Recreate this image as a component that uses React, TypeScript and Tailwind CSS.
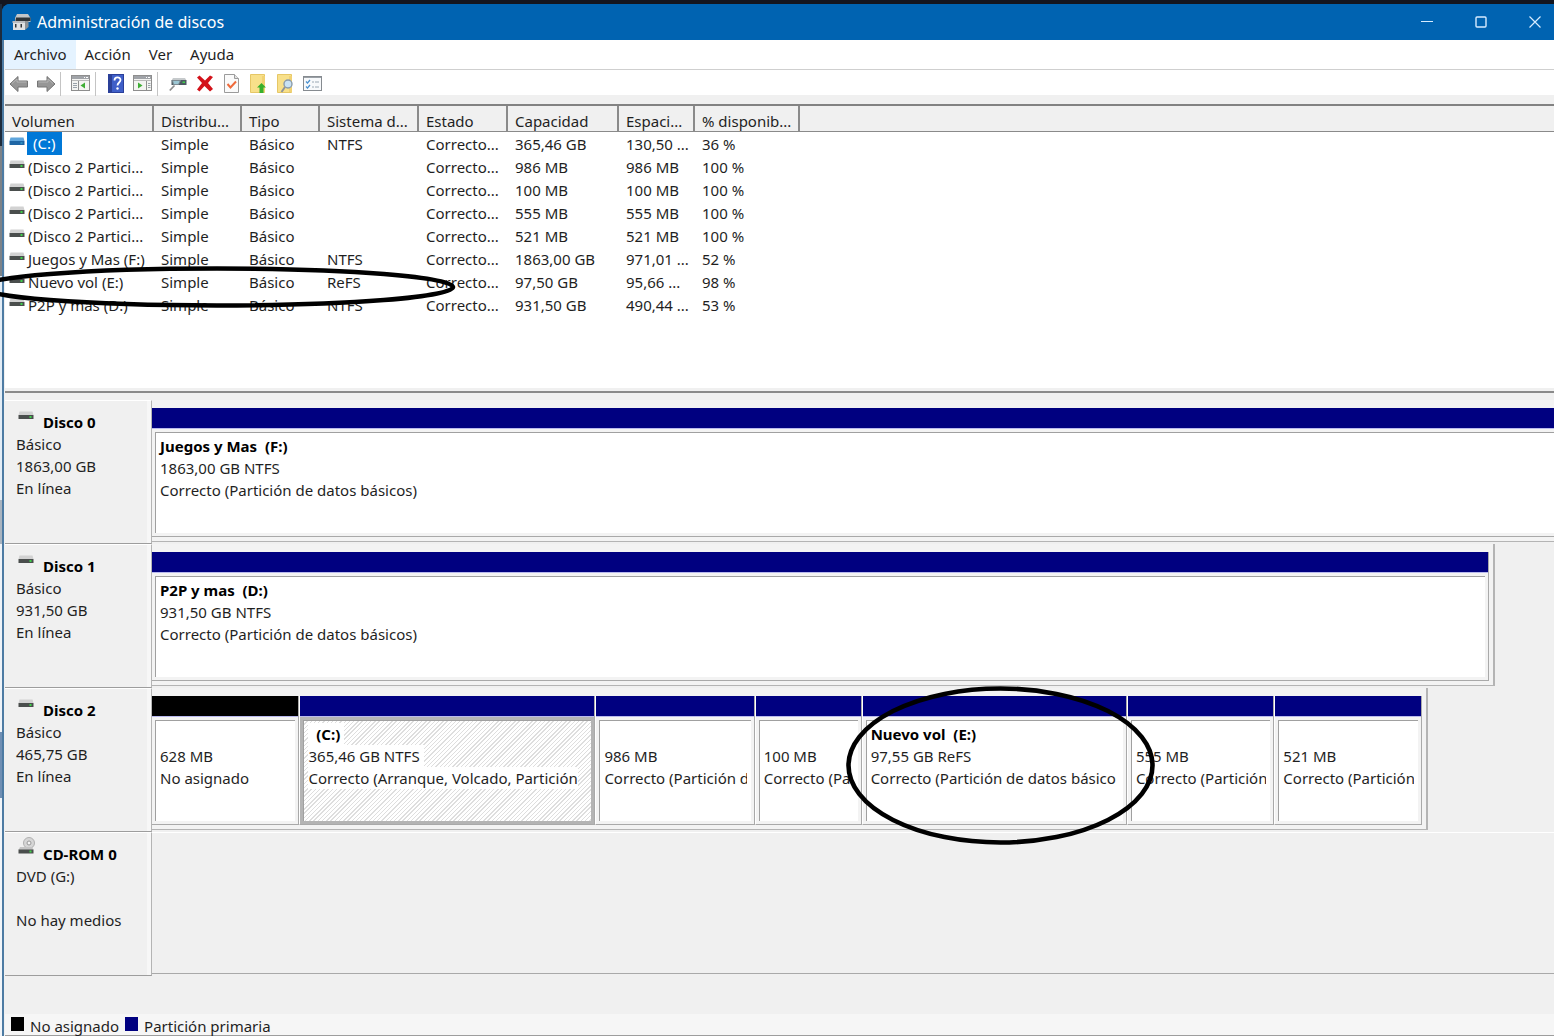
import React, { useState } from "react";

type Volume = {
  name: string;
  layout: string;
  type: string;
  fs: string;
  status: string;
  capacity: string;
  free: string;
  percent: string;
};

type Partition = {
  label?: string;
  size: string;
  status: string;
  weight: number;
  unallocated?: boolean;
  selected?: boolean;
};

type Disk = {
  name: string;
  lines: string[];
  width: string;
  cdrom?: boolean;
  partitions: Partition[];
};

const columns = [
  { label: "Volumen", width: "w-[149px]" },
  { label: "Distribu...", width: "w-[88px]" },
  { label: "Tipo", width: "w-[78px]" },
  { label: "Sistema d...", width: "w-[99px]" },
  { label: "Estado", width: "w-[89px]" },
  { label: "Capacidad", width: "w-[111px]" },
  { label: "Espaci...", width: "w-[76px]" },
  { label: "% disponib...", width: "w-[105px]" },
];

const volumes: Volume[] = [
  { name: "(C:)", layout: "Simple", type: "Básico", fs: "NTFS", status: "Correcto...", capacity: "365,46 GB", free: "130,50 ...", percent: "36 %" },
  { name: "(Disco 2 Partici...", layout: "Simple", type: "Básico", fs: "", status: "Correcto...", capacity: "986 MB", free: "986 MB", percent: "100 %" },
  { name: "(Disco 2 Partici...", layout: "Simple", type: "Básico", fs: "", status: "Correcto...", capacity: "100 MB", free: "100 MB", percent: "100 %" },
  { name: "(Disco 2 Partici...", layout: "Simple", type: "Básico", fs: "", status: "Correcto...", capacity: "555 MB", free: "555 MB", percent: "100 %" },
  { name: "(Disco 2 Partici...", layout: "Simple", type: "Básico", fs: "", status: "Correcto...", capacity: "521 MB", free: "521 MB", percent: "100 %" },
  { name: "Juegos y Mas (F:)", layout: "Simple", type: "Básico", fs: "NTFS", status: "Correcto...", capacity: "1863,00 GB", free: "971,01 ...", percent: "52 %" },
  { name: "Nuevo vol (E:)", layout: "Simple", type: "Básico", fs: "ReFS", status: "Correcto...", capacity: "97,50 GB", free: "95,66 ...", percent: "98 %" },
  { name: "P2P y mas (D:)", layout: "Simple", type: "Básico", fs: "NTFS", status: "Correcto...", capacity: "931,50 GB", free: "490,44 ...", percent: "53 %" },
];

const disks: Disk[] = [
  {
    name: "Disco 0",
    lines: ["Básico", "1863,00 GB", "En línea"],
    width: "w-[101%]",
    partitions: [
      { label: "Juegos y Mas  (F:)", size: "1863,00 GB NTFS", status: "Correcto (Partición de datos básicos)", weight: 1 },
    ],
  },
  {
    name: "Disco 1",
    lines: ["Básico", "931,50 GB", "En línea"],
    width: "w-[95.8%]",
    partitions: [
      { label: "P2P y mas  (D:)", size: "931,50 GB NTFS", status: "Correcto (Partición de datos básicos)", weight: 1 },
    ],
  },
  {
    name: "Disco 2",
    lines: ["Básico", "465,75 GB", "En línea"],
    width: "w-[91%]",
    partitions: [
      { size: "628 MB", status: "No asignado", weight: 148, unallocated: true },
      { label: "  (C:)", size: "365,46 GB NTFS", status: "Correcto (Arranque, Volcado, Partición", weight: 297, selected: true },
      { size: "986 MB", status: "Correcto (Partición d", weight: 159 },
      { size: "100 MB", status: "Correcto (Pa", weight: 106 },
      { label: "Nuevo vol  (E:)", size: "97,55 GB ReFS", status: "Correcto (Partición de datos básico", weight: 266 },
      { size: "555 MB", status: "Correcto (Partición", weight: 147 },
      { size: "521 MB", status: "Correcto (Partición", weight: 147 },
    ],
  },
  { name: "CD-ROM 0", lines: ["DVD (G:)", "", "No hay medios"], width: "w-full", cdrom: true, partitions: [] },
];

function DriveIcon({ selected = false }: { selected?: boolean }) {
  return (
    <svg width="16" height="10" viewBox="0 0 16 10" className="shrink-0">
      <path d="M1.500 0.500h13l1 3.500h-15z" fill={selected ? "#5fa5dc" : "#d2d2d2"} />
      <rect x="0.500" y="4" width="15" height="4" fill={selected ? "#1f66a5" : "#4a4e4d"} />
      <rect x="11.500" y="5" width="2" height="2" fill={selected ? "#2f8fc0" : "#3ed24a"} />
    </svg>
  );
}

function CdIcon() {
  return (
    <svg width="17" height="18" viewBox="0 0 17 18" className="shrink-0">
      <circle cx="11" cy="6" r="5.500" fill="#d6d6d6" stroke="#b0b0b0" />
      <circle cx="11" cy="6" r="2" fill="#f4f4f4" stroke="#999" />
      <path d="M2 10h12l1.500 3h-15z" fill="#c4c4c4" />
      <rect x="0.500" y="12.500" width="15" height="4" fill="#4a4e4d" />
      <rect x="11.500" y="13.500" width="2" height="2" fill="#3ed24a" />
    </svg>
  );
}

function AppIcon() {
  return (
    <svg width="19" height="18" viewBox="0 0 19 18">
      <path d="M5 1h11l2.500 4v4H3V5z" fill="#c3c6c8" />
      <path d="M4 4.500h14.500v3.500H3.500z" fill="#2f3437" />
      <path d="M1 8h12v9H1z" fill="#dfe1e2" />
      <path d="M0.500 8h13v2h-13z" fill="#b9bdc0" />
      <rect x="3" y="11" width="1.500" height="3.500" fill="#33383b" />
      <rect x="8.500" y="11" width="1.500" height="3.500" fill="#33383b" />
      <path d="M13 8h3.500v6l-3.500 3z" fill="#8d9295" />
    </svg>
  );
}

function ArrowIcon({ flip = false }: { flip?: boolean }) {
  return (
    <svg width="20" height="18" viewBox="0 0 20 18" className={flip ? "-scale-x-100" : ""}>
      <path d="M1 9l8-7.500v4.500h9.500v6H9v4.500z" fill="#969696" stroke="#757575" strokeLinejoin="round" />
      <path d="M3 8.500l5-4.500v3h9.500" fill="none" stroke="#b5b5b5" />
    </svg>
  );
}

function PaneIcon({ right = false }: { right?: boolean }) {
  return (
    <svg width="20" height="17" viewBox="0 0 20 17">
      <rect x="0.500" y="0.500" width="18" height="15" fill="#f4f4f2" stroke="#8e8e8e" />
      <rect x="1" y="1" width="17" height="3" fill="#a0a3a8" />
      <path d="M13 2.500h1M15 2.500h2" stroke="#fff" />
      <path d="M1 5.500h17" stroke="#b9b9b9" />
      {right ? (
        <>
          <path d="M13.500 6v9" stroke="#8e8e8e" />
          <path d="M15 8.500h2.500M15 10.500h2.500M15 12.500h2.500" stroke="#9aa2aa" />
          <path d="M5 7.500v6l4.500-3z" fill="#3fae35" />
        </>
      ) : (
        <>
          <path d="M7.500 6v9" stroke="#8e8e8e" />
          <path d="M2 8.500h4M2 10.500h4M2 12.500h4" stroke="#9aa2aa" />
          <path d="M14 7.500v6l-4.500-3z" fill="#3fae35" />
        </>
      )}
    </svg>
  );
}

function HelpIcon() {
  return (
    <svg width="16" height="19" viewBox="0 0 16 19">
      <rect x="0.500" y="0.500" width="15" height="18" fill="#3f5fc8" stroke="#2a3f9a" />
      <path d="M1 1h3v17H1z" fill="#2b4096" />
      <path d="M6.500 6.500c0-4 6-4 6-0.500 0 2.500-3 2.500-3 5.500" fill="none" stroke="#fff" strokeWidth="1.800" />
      <circle cx="9.500" cy="14.500" r="1.200" fill="#fff" />
    </svg>
  );
}

function ConnectIcon() {
  return (
    <svg width="18" height="16" viewBox="0 0 18 16">
      <path d="M4 2h12l1.500 2.500h-15z" fill="#c6cacc" />
      <rect x="2.500" y="4" width="15" height="5" fill="#4d5a62" />
      <rect x="13.500" y="5.500" width="2.500" height="1.500" fill="#3ed24a" />
      <path d="M3.500 4.500h8l-2 4h-5z" fill="#9cc7d4" stroke="#7d8b92" />
      <path d="M5.500 9.500L0.800 14.500" stroke="#8f8f8f" strokeWidth="1.800" />
    </svg>
  );
}

function DeleteIcon() {
  return (
    <svg width="18" height="17" viewBox="0 0 18 17">
      <path d="M1 2.500L3.500 0.500 9 5.500l5-5 3 1.500-5 6 5 6-3 2.500-5.500-5.500-5 5.500-2.500-2 5-6.500z" fill="#d3121a" />
    </svg>
  );
}

function CheckDocIcon() {
  return (
    <svg width="15" height="19" viewBox="0 0 15 19">
      <path d="M0.500 0.500h10l4 4v14h-14z" fill="#fafafa" stroke="#9b9b9b" />
      <path d="M10.500 0.500v4h4" fill="#e2e2e2" stroke="#9b9b9b" />
      <path d="M3.500 10l3 3.500 5.500-6" fill="none" stroke="#ef6a3a" strokeWidth="2" />
    </svg>
  );
}

function FolderIcon({ search = false }: { search?: boolean }) {
  return (
    <svg width="17" height="20" viewBox="0 0 17 20">
      <path d="M0.500 0.500h14v18h-14z" fill="#f8e08a" stroke="#e6c766" />
      <path d="M12 2h3v16h-3z" fill="#f1d273" />
      {search ? (
        <>
          <circle cx="11" cy="10" r="4" fill="#c9e2f4" stroke="#8a9bab" strokeWidth="1.400" />
          <path d="M8 13l-3.500 5" stroke="#8f9499" strokeWidth="2" />
        </>
      ) : (
        <path d="M11.500 9l4.500 4.500h-2.500V19h-4v-5.500H7z" fill="#37b02c" />
      )}
    </svg>
  );
}

function ListIcon() {
  return (
    <svg width="19" height="16" viewBox="0 0 19 16">
      <rect x="0.500" y="0.500" width="18" height="14" fill="#f7f9fb" stroke="#868b90" />
      <path d="M1 1.500h17" stroke="#9aa0a6" />
      <path d="M3 5.500l1.500 1.500 2.500-3M3 10.500l1.500 1.500 2.500-3" fill="none" stroke="#4a90cf" strokeWidth="1.200" />
      <path d="M9 6h2M12 6h4M9 11h2M12 11h4" stroke="#9aa8b4" />
    </svg>
  );
}

function ToolButton({ label, children }: { label: string; children: React.ReactNode }) {
  return (
    <button aria-label={label} className="flex h-6 w-[27px] items-center justify-center">
      {children}
    </button>
  );
}

function Separator() {
  return <div className="ml-px mr-1.5 h-6 w-px bg-[#c4c4c4]" />;
}

function TitleBar() {
  return (
    <header className="flex h-9 shrink-0 items-center rounded-tl-lg bg-[#0063b1] pl-2.5 text-white">
      <AppIcon />
      <h1 className="ml-1.5 flex-1 text-base">Administración de discos</h1>
      <button aria-label="Minimizar" className="flex h-full w-[54px] items-center justify-center">
        <svg width="12" height="12" viewBox="0 0 12 12"><path d="M0 5.500h12" stroke="#d6ecff" /></svg>
      </button>
      <button aria-label="Maximizar" className="flex h-full w-[54px] items-center justify-center">
        <svg width="12" height="12" viewBox="0 0 12 12"><rect x="1" y="1" width="10" height="10" rx="1" fill="none" stroke="#d6ecff" strokeWidth="1.400" /></svg>
      </button>
      <button aria-label="Cerrar" className="-mr-2 flex h-full w-[54px] items-center justify-center">
        <svg width="12" height="12" viewBox="0 0 12 12"><path d="M0.500 0.500l11 11M11.500 0.500l-11 11" stroke="#d6ecff" strokeWidth="1.200" /></svg>
      </button>
    </header>
  );
}

function MenuBar() {
  return (
    <nav className="flex h-[30px] shrink-0 items-stretch border-b border-[#cfcfcf] bg-white">
      <button className="bg-[#e5f3ff] px-[9px]">Archivo</button>
      <button className="px-[9px]">Acción</button>
      <button className="px-[9px]">Ver</button>
      <button className="px-[9px]">Ayuda</button>
    </nav>
  );
}

function ToolBar() {
  return (
    <div className="flex h-[25px] shrink-0 items-center bg-white pt-0.5">
      <ToolButton label="Atrás"><ArrowIcon /></ToolButton>
      <ToolButton label="Adelante"><ArrowIcon flip /></ToolButton>
      <Separator />
      <ToolButton label="Mostrar árbol"><PaneIcon /></ToolButton>
      <Separator />
      <ToolButton label="Ayuda"><HelpIcon /></ToolButton>
      <ToolButton label="Mostrar acciones"><PaneIcon right /></ToolButton>
      <Separator />
      <ToolButton label="Conectar"><ConnectIcon /></ToolButton>
      <ToolButton label="Eliminar"><DeleteIcon /></ToolButton>
      <ToolButton label="Comprobar"><CheckDocIcon /></ToolButton>
      <ToolButton label="Subir"><FolderIcon /></ToolButton>
      <ToolButton label="Buscar"><FolderIcon search /></ToolButton>
      <ToolButton label="Propiedades"><ListIcon /></ToolButton>
    </div>
  );
}

function VolumeList() {
  const [selected, setSelected] = useState(0);

  return (
    <section className="min-h-[284px] shrink-0 border-t-2 border-[#828282] bg-white">
      <table className="w-full table-fixed border-separate border-spacing-0 text-left leading-5 whitespace-nowrap">
        <thead>
          <tr className="h-[26px] bg-[#f0f0f0]">
            {columns.map((col) => (
              <th key={col.label} className={`${col.width} border-r-2 border-b border-[#8a8a8a] pt-1 pl-[7px] font-normal`}>
                {col.label}
              </th>
            ))}
            <th className="border-b border-[#8a8a8a]" />
          </tr>
        </thead>
        <tbody>
          {volumes.map((vol, idx) => (
            <tr key={idx} onClick={() => setSelected(idx)} className="h-[23px]">
              <td>
                <div className="flex h-[23px] items-center pl-1">
                  <div className="mb-1"><DriveIcon selected={idx === selected} /></div>
                  {idx === selected ? (
                    <span className="ml-0.5 bg-[#0078d7] px-1.5 leading-[23px] text-white">{vol.name}</span>
                  ) : (
                    <span className="ml-[3px]">{vol.name}</span>
                  )}
                </div>
              </td>
              <td className="pl-[7px]">{vol.layout}</td>
              <td className="pl-[7px]">{vol.type}</td>
              <td className="pl-[7px]">{vol.fs}</td>
              <td className="pl-[7px]">{vol.status}</td>
              <td className="pl-[7px]">{vol.capacity}</td>
              <td className="pl-[7px]">{vol.free}</td>
              <td className="pl-[7px]">{vol.percent}</td>
              <td />
            </tr>
          ))}
        </tbody>
      </table>
    </section>
  );
}

function PartitionBox({ part }: { part: Partition }) {
  return (
    <div
      className="flex min-w-0 basis-0 flex-col border-r border-b border-[#a9a9a9] not-first:border-l not-first:border-l-white"
      style={{ flexGrow: part.weight }}
    >
      <div className={`h-[21px] shrink-0 border-b border-[#b9b9ee] ${part.unallocated ? "bg-black" : "bg-[#000080]"}`} />
      <div className={`flex min-h-0 flex-1 p-[3px] ${part.selected ? "bg-[#b4b4b4]" : "bg-[#f3f3f3]"}`}>
        <div
          className={`min-w-0 flex-1 overflow-hidden border-t border-l border-[#a0a0a0] pt-0.5 pr-1 pl-1 leading-[22px] whitespace-pre ${
            part.selected ? "bg-[repeating-linear-gradient(135deg,#ffffff_0px,#ffffff_2px,#dedede_2px,#dedede_3px)]" : "bg-white"
          }`}
        >
          <div className="h-[22px]"><b className="inline-block bg-white pr-1 text-black">{part.label}</b></div>
          <div className="h-[22px]"><span className="inline-block bg-white pr-1">{part.size}</span></div>
          <div className="h-[22px] overflow-hidden"><span className="inline-block bg-white">{part.status}</span></div>
        </div>
      </div>
    </div>
  );
}

function DiskRow({ disk }: { disk: Disk }) {
  return (
    <div className="flex h-36 shrink-0">
      <div className="w-[147px] shrink-0 border-t border-r border-b border-t-white border-r-[#b4b4b4] border-b-[#9d9d9d]">
        <div className="h-full border-r-4 border-[#f7f7f7] pt-2.5 pl-[11px] leading-[22px]">
          <div className="flex">
            <div className="flex w-[27px] items-start pl-0.5">
              {disk.cdrom ? <div className="-mt-1.5"><CdIcon /></div> : <DriveIcon />}
            </div>
            <b className="text-black">{disk.name}</b>
          </div>
          {disk.lines.map((line, idx) => (
            <div key={idx} className="h-[22px]">{line}</div>
          ))}
        </div>
      </div>
      <div className="min-w-0 flex-1 overflow-hidden pb-0.5">
        {disk.cdrom ? (
          <div className="h-full border-t border-b border-t-white border-b-[#a9a9a9]" />
        ) : (
          <div className={`${disk.width} flex h-full flex-col border-r-2 border-b border-[#b4b4b4] bg-[#f3f3f3] pt-2 pr-1 pb-1`}>
            <div className="flex flex-1">
              {disk.partitions.map((part, idx) => (
                <PartitionBox key={idx} part={part} />
              ))}
            </div>
          </div>
        )}
      </div>
    </div>
  );
}

function Legend() {
  return (
    <footer className="flex h-[22px] shrink-0 items-end border-b border-[#9d9d9d] bg-[#f6f6f6] pl-1.5 leading-[18px]">
      <span className="mb-1 h-3.5 w-[13px] bg-black" />
      <span className="ml-1.5">No asignado</span>
      <span className="mb-1 ml-1.5 h-3.5 w-[13px] bg-[#000080]" />
      <span className="ml-1.5">Partición primaria</span>
    </footer>
  );
}

// Hand-drawn marks over the ReFS volume
function Marks() {
  return (
    <svg className="pointer-events-none absolute inset-0 h-full w-full">
      <ellipse cx="217" cy="287" rx="236" ry="18.500" fill="none" stroke="#000" strokeWidth="4.600" />
      <ellipse cx="1000.500" cy="765.500" rx="152" ry="77" fill="none" stroke="#000" strokeWidth="4.600" />
    </svg>
  );
}

export default function App() {
  return (
    <main className="relative flex h-screen overflow-hidden bg-[#14161f] pt-1 font-['Noto_Sans','Open_Sans',sans-serif] text-[15px] text-[#1f1f1f]">
      <div className="flex w-0.5 shrink-0 flex-col">
        <div className="h-[142px] bg-[#1d2b3c]" />
        <div className="h-[130px] bg-[#7c8288]" />
        <div className="h-[224px] bg-[#e3edf6]" />
        <div className="h-[44px] bg-[#a9b4c0]" />
        <div className="h-[188px] bg-[#eef3f8]" />
        <div className="h-[66px] bg-[#6f8fb4]" />
        <div className="flex-1 bg-[#f1f5f9]" />
      </div>
      <div className="flex min-w-0 flex-1 flex-col rounded-tl-lg bg-[#0063b1]">
        <TitleBar />
        <div className="flex min-h-0 flex-1 flex-col border-l-2 border-[#4d7ba3] bg-[#f0f0f0] pl-px">
          <MenuBar />
          <ToolBar />
          <div className="h-[9px] shrink-0" />
          <VolumeList />
          <div className="mt-[3px] mb-[7px] h-0.5 shrink-0 bg-[#8a8a8a]" />
          <div className="flex min-h-0 flex-1 flex-col">
            {disks.map((disk) => (
              <DiskRow key={disk.name} disk={disk} />
            ))}
          </div>
          <Legend />
        </div>
      </div>
      <Marks />
    </main>
  );
}
